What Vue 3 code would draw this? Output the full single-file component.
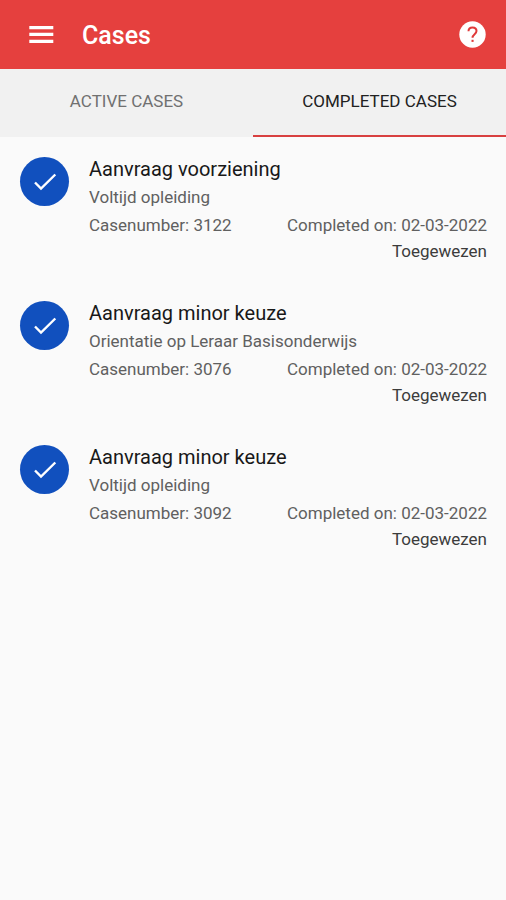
<script setup>
import { ref } from 'vue'

const tabs = ['Active cases', 'Completed cases']
const selected = ref(1)

const cases = [
  { number: 3122, title: 'Aanvraag voorziening', subject: 'Voltijd opleiding', completed: '02-03-2022', status: 'Toegewezen' },
  { number: 3076, title: 'Aanvraag minor keuze', subject: 'Orientatie op Leraar Basisonderwijs', completed: '02-03-2022', status: 'Toegewezen' },
  { number: 3092, title: 'Aanvraag minor keuze', subject: 'Voltijd opleiding', completed: '02-03-2022', status: 'Toegewezen' },
]
</script>

<template>
  <div class="screen">
    <header class="bar">
      <button class="icon-button" type="button" aria-label="Menu">
        <svg width="32" height="32" viewBox="0 0 32 32" fill="#fff">
          <path d="M4.300 7h24v3.200h-24zM4.300 13.800h24v3.200h-24zM4.300 20.800h24v3.200h-24z" />
        </svg>
      </button>
      <h1 class="heading">Cases</h1>
      <button class="icon-button" type="button" aria-label="Help">
        <svg width="32" height="32" viewBox="0 0 32 32" fill="none">
          <circle cx="16.500" cy="15.500" r="13.200" fill="#fff" />
          <path d="M12.500 12.200c0-2.300 1.700-3.700 4-3.700s4 1.400 4 3.600c0 3-4 3.200-4 6.600" stroke="#e03a3a" stroke-width="2" />
          <path d="M15.500 20.800h2.100v2.100h-2.100z" fill="#e03a3a" />
        </svg>
      </button>
    </header>

    <div class="tabs" role="tablist">
      <button
        v-for="(tab, i) in tabs"
        :key="tab"
        class="tab"
        :class="{ active: selected === i }"
        type="button"
        role="tab"
        :aria-selected="selected === i"
        @click="selected = i"
      >{{ tab }}</button>
    </div>

    <main class="list">
      <article v-for="item in cases" :key="item.number" class="case">
        <span class="badge">
          <svg width="28" height="28" viewBox="0 0 28 28" fill="none" stroke="#fff" stroke-width="2.4">
            <path d="M4 14.500l6 6L24.300 6.500" />
          </svg>
        </span>
        <div class="details">
          <h2 class="title">{{ item.title }}</h2>
          <p class="line">{{ item.subject }}</p>
          <div class="line meta">
            <span>Casenumber: {{ item.number }}</span>
            <span>Completed on: {{ item.completed }}</span>
          </div>
          <p class="status">{{ item.status }}</p>
        </div>
      </article>
    </main>
  </div>
</template>

<style>
body {
  background: #fafafa;
}
</style>

<style scoped>
.screen {
  min-height: 100vh;
  background: #fafafa;
  color: #181818;
  font-family: Roboto, sans-serif;
}

.bar {
  display: flex;
  align-items: center;
  height: 69px;
  padding: 0 18px 0 25px;
  background: #e5403e;
  color: #fff;
}

.icon-button {
  display: flex;
  padding: 0;
  border: 0;
  background: none;
}

.heading {
  flex: 1;
  margin: 0 0 0 25px;
  padding-top: 2px;
  font-size: 25px;
  font-weight: 500;
}

.tabs {
  display: grid;
  grid-template-columns: 1fr 1fr;
  background: #f1f1f1;
}

.tab {
  height: 68px;
  padding: 0 0 3px;
  border: 0;
  border-bottom: 2px solid transparent;
  background: none;
  color: #707070;
  font-family: inherit;
  font-size: 17px;
  font-weight: 400;
  text-transform: uppercase;
}

.tab.active {
  border-bottom-color: #d84040;
  color: #212121;
}

.list {
  display: grid;
  gap: 36px;
  padding: 18px 19px 18px 20px;
}

.case {
  display: flex;
  gap: 20px;
}

.badge {
  display: flex;
  flex: none;
  align-items: center;
  justify-content: center;
  width: 49px;
  height: 49px;
  margin-top: 2px;
  border-radius: 50%;
  background: #1150be;
}

.details {
  flex: 1;
}

.title {
  margin: 0;
  font-size: 20px;
  font-weight: 400;
  line-height: 28px;
}

.line,
.status {
  margin: 0;
  font-size: 17px;
  font-weight: 400;
}

.line {
  color: #606060;
  line-height: 28px;
}

.status {
  color: #3c3c3c;
  line-height: 24px;
  text-align: right;
}

.meta {
  display: flex;
  justify-content: space-between;
}
</style>
